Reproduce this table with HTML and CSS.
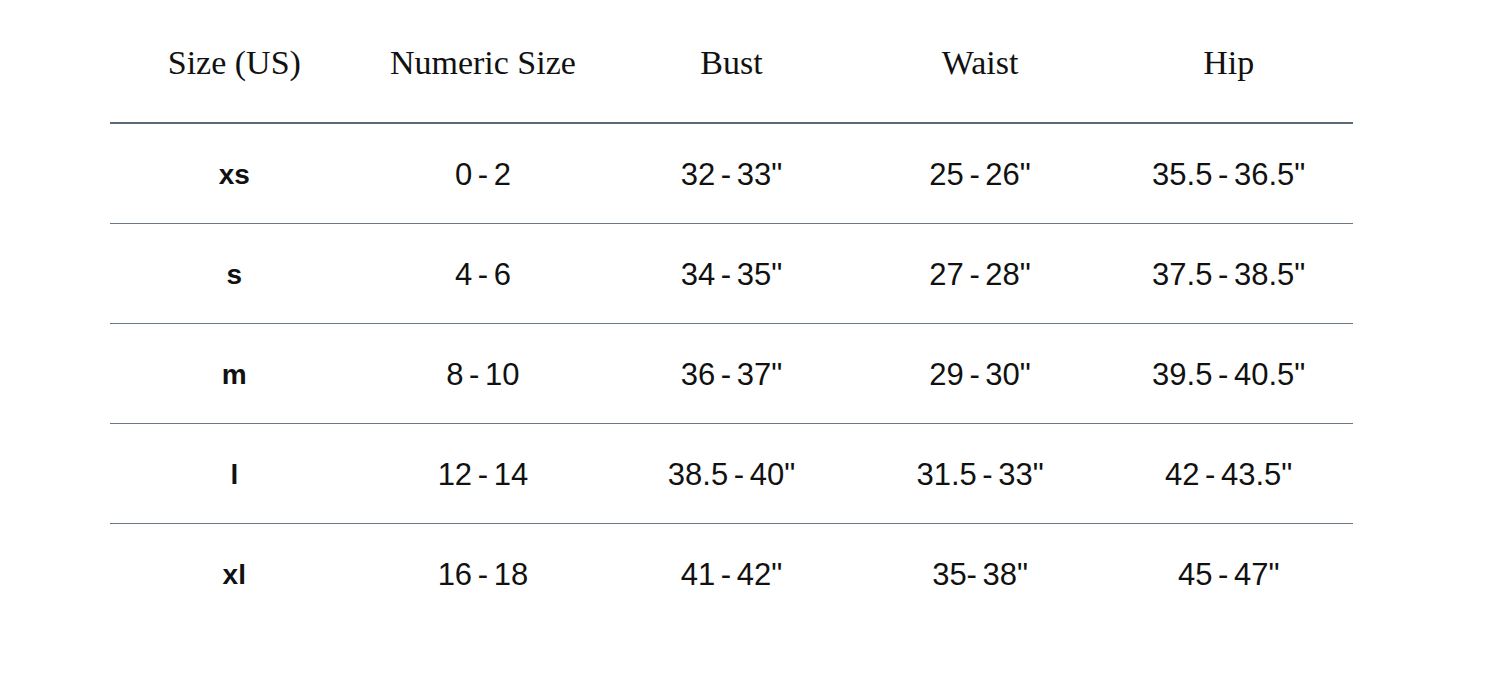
FILE: index.html
```html
<!DOCTYPE html>
<html>
<head>
<meta charset="utf-8">
<link rel="stylesheet" href="styles.css">
</head>
<body>
<div class="chart">
  <div class="row head">
    <div class="cell">Size (US)</div>
    <div class="cell">Numeric Size</div>
    <div class="cell">Bust</div>
    <div class="cell">Waist</div>
    <div class="cell">Hip</div>
  </div>
  <div class="row">
    <div class="cell size">xs</div>
    <div class="cell">0 - 2</div>
    <div class="cell">32 - 33"</div>
    <div class="cell">25 - 26"</div>
    <div class="cell">35.5 - 36.5"</div>
  </div>
  <div class="row">
    <div class="cell size">s</div>
    <div class="cell">4 - 6</div>
    <div class="cell">34 - 35"</div>
    <div class="cell">27 - 28"</div>
    <div class="cell">37.5 - 38.5"</div>
  </div>
  <div class="row">
    <div class="cell size">m</div>
    <div class="cell">8 - 10</div>
    <div class="cell">36 - 37"</div>
    <div class="cell">29 - 30"</div>
    <div class="cell">39.5 - 40.5"</div>
  </div>
  <div class="row">
    <div class="cell size">l</div>
    <div class="cell">12 - 14</div>
    <div class="cell">38.5 - 40"</div>
    <div class="cell">31.5 - 33"</div>
    <div class="cell">42 - 43.5"</div>
  </div>
  <div class="row last">
    <div class="cell size">xl</div>
    <div class="cell">16 - 18</div>
    <div class="cell">41 - 42"</div>
    <div class="cell">35- 38"</div>
    <div class="cell">45 - 47"</div>
  </div>
</div>
</body>
</html>
```
FILE: styles.css
```css
html, body {
  margin: 0;
  padding: 0;
  background: #ffffff;
}
.chart {
  width: 1243px;
  margin-left: 110px;
  color: #111111;
  font-family: "Liberation Sans", Arial, sans-serif;
}
.row {
  display: grid;
  grid-template-columns: repeat(5, 1fr);
  height: 99px;
  align-items: center;
  border-bottom: 1px solid #6b7883;
  font-size: 31px;
  word-spacing: -3px;
}
.row.last {
  border-bottom: none;
}
.row.head {
  border-bottom: 2px solid #5b6b77;
  font-family: "Liberation Serif", "Times New Roman", serif;
  font-size: 34px;
  word-spacing: 0;
  padding-top: 2px;
  box-sizing: border-box;
  height: 124px;
}
.cell {
  text-align: center;
  padding-top: 2px;
}
.cell.size {
  font-weight: bold;
  font-size: 28px;
}
```
